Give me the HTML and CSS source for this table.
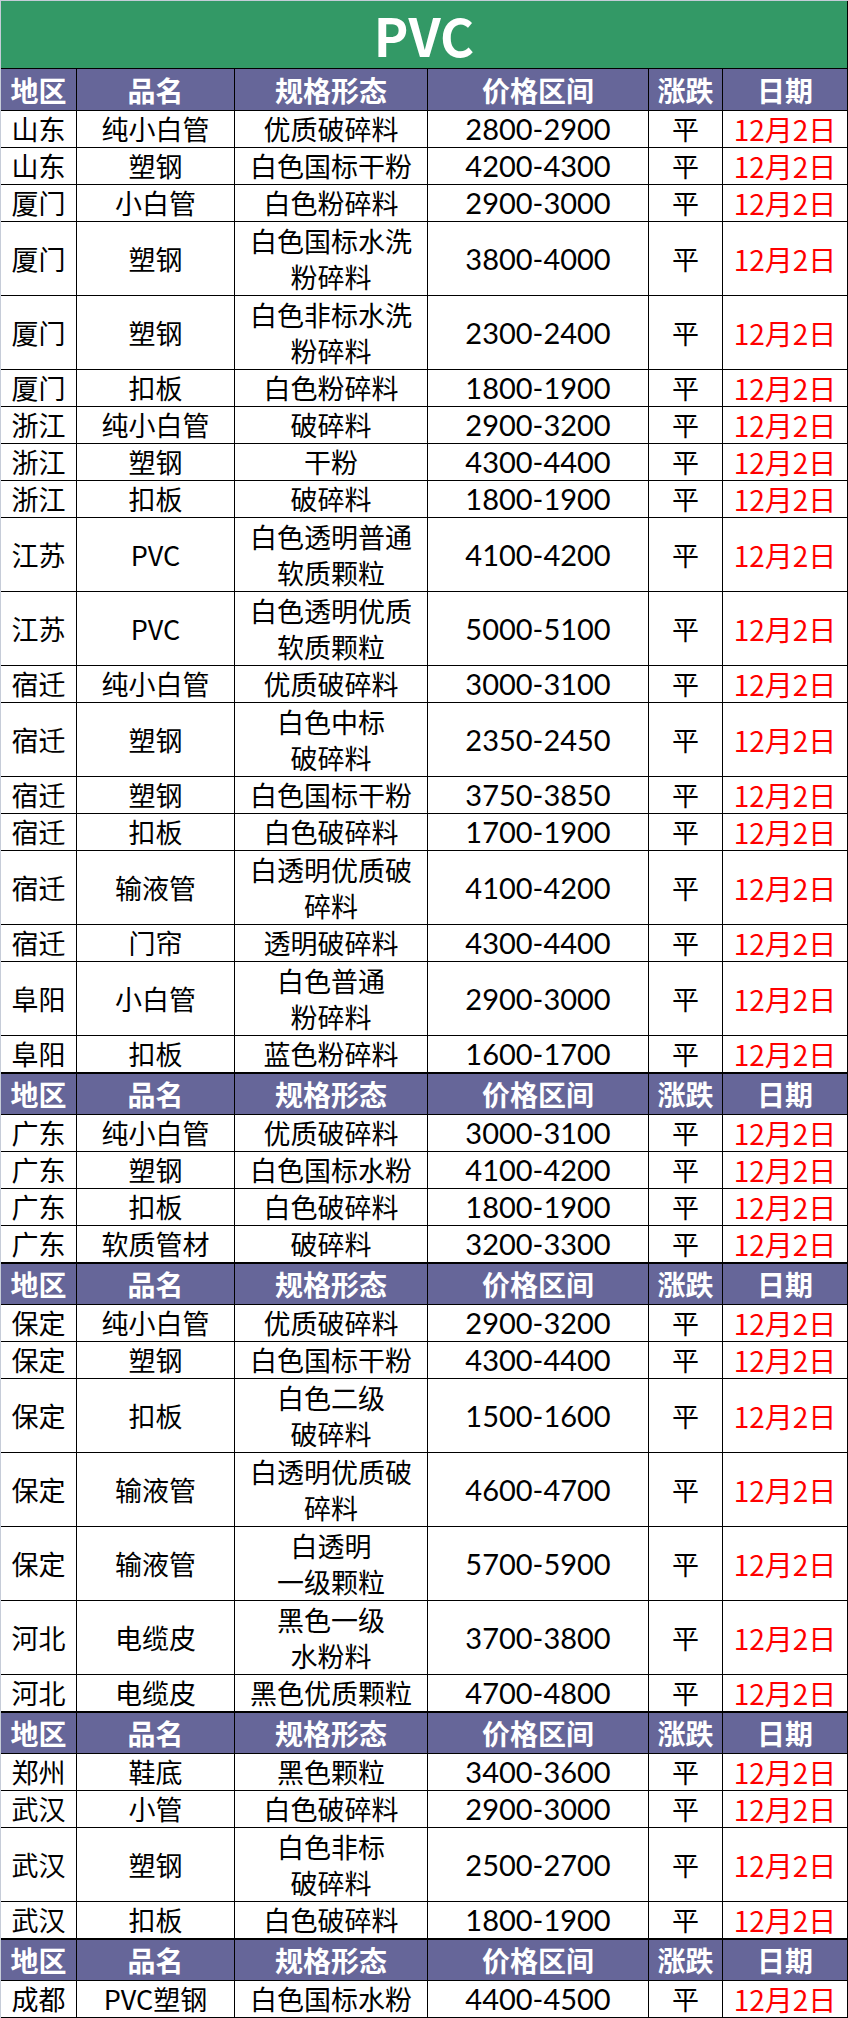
FILE: index.html
```html
<!DOCTYPE html>
<html lang="zh-CN">
<head>
<meta charset="utf-8">
<title>PVC</title>
<link rel="stylesheet" href="styles.css">
</head>
<body>
<div class="sheet">
<table class="grid">
<colgroup>
<col class="c1"><col class="c2"><col class="c3"><col class="c4"><col class="c5"><col class="c6">
</colgroup>
<tbody>
<tr class="title"><td colspan="6">PVC</td></tr>
<tr class="hd"><td>地区</td><td>品名</td><td>规格形态</td><td>价格区间</td><td>涨跌</td><td>日期</td></tr>
<tr class="s"><td>山东</td><td>纯小白管</td><td>优质破碎料</td><td class="num">2800-2900</td><td>平</td><td class="date">12月2日</td></tr>
<tr class="s"><td>山东</td><td>塑钢</td><td>白色国标干粉</td><td class="num">4200-4300</td><td>平</td><td class="date">12月2日</td></tr>
<tr class="s"><td>厦门</td><td>小白管</td><td>白色粉碎料</td><td class="num">2900-3000</td><td>平</td><td class="date">12月2日</td></tr>
<tr class="d"><td>厦门</td><td>塑钢</td><td>白色国标水洗<br>粉碎料</td><td class="num">3800-4000</td><td>平</td><td class="date">12月2日</td></tr>
<tr class="d"><td>厦门</td><td>塑钢</td><td>白色非标水洗<br>粉碎料</td><td class="num">2300-2400</td><td>平</td><td class="date">12月2日</td></tr>
<tr class="s"><td>厦门</td><td>扣板</td><td>白色粉碎料</td><td class="num">1800-1900</td><td>平</td><td class="date">12月2日</td></tr>
<tr class="s"><td>浙江</td><td>纯小白管</td><td>破碎料</td><td class="num">2900-3200</td><td>平</td><td class="date">12月2日</td></tr>
<tr class="s"><td>浙江</td><td>塑钢</td><td>干粉</td><td class="num">4300-4400</td><td>平</td><td class="date">12月2日</td></tr>
<tr class="s"><td>浙江</td><td>扣板</td><td>破碎料</td><td class="num">1800-1900</td><td>平</td><td class="date">12月2日</td></tr>
<tr class="d"><td>江苏</td><td>PVC</td><td>白色透明普通<br>软质颗粒</td><td class="num">4100-4200</td><td>平</td><td class="date">12月2日</td></tr>
<tr class="d"><td>江苏</td><td>PVC</td><td>白色透明优质<br>软质颗粒</td><td class="num">5000-5100</td><td>平</td><td class="date">12月2日</td></tr>
<tr class="s"><td>宿迁</td><td>纯小白管</td><td>优质破碎料</td><td class="num">3000-3100</td><td>平</td><td class="date">12月2日</td></tr>
<tr class="d"><td>宿迁</td><td>塑钢</td><td>白色中标<br>破碎料</td><td class="num">2350-2450</td><td>平</td><td class="date">12月2日</td></tr>
<tr class="s"><td>宿迁</td><td>塑钢</td><td>白色国标干粉</td><td class="num">3750-3850</td><td>平</td><td class="date">12月2日</td></tr>
<tr class="s"><td>宿迁</td><td>扣板</td><td>白色破碎料</td><td class="num">1700-1900</td><td>平</td><td class="date">12月2日</td></tr>
<tr class="d"><td>宿迁</td><td>输液管</td><td>白透明优质破<br>碎料</td><td class="num">4100-4200</td><td>平</td><td class="date">12月2日</td></tr>
<tr class="s"><td>宿迁</td><td>门帘</td><td>透明破碎料</td><td class="num">4300-4400</td><td>平</td><td class="date">12月2日</td></tr>
<tr class="d"><td>阜阳</td><td>小白管</td><td>白色普通<br>粉碎料</td><td class="num">2900-3000</td><td>平</td><td class="date">12月2日</td></tr>
<tr class="s"><td>阜阳</td><td>扣板</td><td>蓝色粉碎料</td><td class="num">1600-1700</td><td>平</td><td class="date">12月2日</td></tr>
<tr class="hd sep"><td>地区</td><td>品名</td><td>规格形态</td><td>价格区间</td><td>涨跌</td><td>日期</td></tr>
<tr class="s"><td>广东</td><td>纯小白管</td><td>优质破碎料</td><td class="num">3000-3100</td><td>平</td><td class="date">12月2日</td></tr>
<tr class="s"><td>广东</td><td>塑钢</td><td>白色国标水粉</td><td class="num">4100-4200</td><td>平</td><td class="date">12月2日</td></tr>
<tr class="s"><td>广东</td><td>扣板</td><td>白色破碎料</td><td class="num">1800-1900</td><td>平</td><td class="date">12月2日</td></tr>
<tr class="s"><td>广东</td><td>软质管材</td><td>破碎料</td><td class="num">3200-3300</td><td>平</td><td class="date">12月2日</td></tr>
<tr class="hd sep"><td>地区</td><td>品名</td><td>规格形态</td><td>价格区间</td><td>涨跌</td><td>日期</td></tr>
<tr class="s"><td>保定</td><td>纯小白管</td><td>优质破碎料</td><td class="num">2900-3200</td><td>平</td><td class="date">12月2日</td></tr>
<tr class="s"><td>保定</td><td>塑钢</td><td>白色国标干粉</td><td class="num">4300-4400</td><td>平</td><td class="date">12月2日</td></tr>
<tr class="d"><td>保定</td><td>扣板</td><td>白色二级<br>破碎料</td><td class="num">1500-1600</td><td>平</td><td class="date">12月2日</td></tr>
<tr class="d"><td>保定</td><td>输液管</td><td>白透明优质破<br>碎料</td><td class="num">4600-4700</td><td>平</td><td class="date">12月2日</td></tr>
<tr class="d"><td>保定</td><td>输液管</td><td>白透明<br>一级颗粒</td><td class="num">5700-5900</td><td>平</td><td class="date">12月2日</td></tr>
<tr class="d"><td>河北</td><td>电缆皮</td><td>黑色一级<br>水粉料</td><td class="num">3700-3800</td><td>平</td><td class="date">12月2日</td></tr>
<tr class="s"><td>河北</td><td>电缆皮</td><td>黑色优质颗粒</td><td class="num">4700-4800</td><td>平</td><td class="date">12月2日</td></tr>
<tr class="hd sep"><td>地区</td><td>品名</td><td>规格形态</td><td>价格区间</td><td>涨跌</td><td>日期</td></tr>
<tr class="s"><td>郑州</td><td>鞋底</td><td>黑色颗粒</td><td class="num">3400-3600</td><td>平</td><td class="date">12月2日</td></tr>
<tr class="s"><td>武汉</td><td>小管</td><td>白色破碎料</td><td class="num">2900-3000</td><td>平</td><td class="date">12月2日</td></tr>
<tr class="d"><td>武汉</td><td>塑钢</td><td>白色非标<br>破碎料</td><td class="num">2500-2700</td><td>平</td><td class="date">12月2日</td></tr>
<tr class="s"><td>武汉</td><td>扣板</td><td>白色破碎料</td><td class="num">1800-1900</td><td>平</td><td class="date">12月2日</td></tr>
<tr class="hd sep"><td>地区</td><td>品名</td><td>规格形态</td><td>价格区间</td><td>涨跌</td><td>日期</td></tr>
<tr class="s"><td>成都</td><td>PVC塑钢</td><td>白色国标水粉</td><td class="num">4400-4500</td><td>平</td><td class="date">12月2日</td></tr>
</tbody>
</table>
</div>
</body>
</html>
```

FILE: styles.css
```css
html, body {
  margin: 0;
  padding: 0;
  background: #ffffff;
}

.sheet {
  width: 848px;
  box-sizing: border-box;
  border-top: 1px solid #c6ccd8;
  border-left: 1px solid #c6ccd8;
}

.grid {
  width: 847px;
  table-layout: fixed;
  border-collapse: separate;
  border-spacing: 0;
  font-family: "Noto Sans CJK SC", "Microsoft YaHei", sans-serif;
  color: #000000;
}

.c1 { width: 76px; }
.c2 { width: 158px; }
.c3 { width: 193px; }
.c4 { width: 221px; }
.c5 { width: 74px; }
.c6 { width: 125px; }

.grid td {
  box-sizing: border-box;
  padding: 0;
  text-align: center;
  vertical-align: middle;
  border-right: 1px solid #000000;
  border-bottom: 1px solid #000000;
  font-size: 27px;
  line-height: 36px;
  white-space: nowrap;
}

.title td {
  height: 68px;
  background: #339966;
  color: #ffffff;
  font-size: 52px;
  font-weight: 700;
  line-height: 66px;
}

.hd td {
  height: 42px;
  background: #666699;
  color: #ffffff;
  font-size: 28px;
  font-weight: 700;
  line-height: 40px;
}

.sep td {
  box-shadow: inset 0 1px 0 #000000;
}

.s td {
  height: 37px;
}

.d td {
  height: 74px;
}

.grid td.num {
  font-family: Lato, "Noto Sans CJK SC", sans-serif;
  font-size: 29px;
}

.grid td.date {
  color: #ff0000;
  font-size: 28px;
}
```
